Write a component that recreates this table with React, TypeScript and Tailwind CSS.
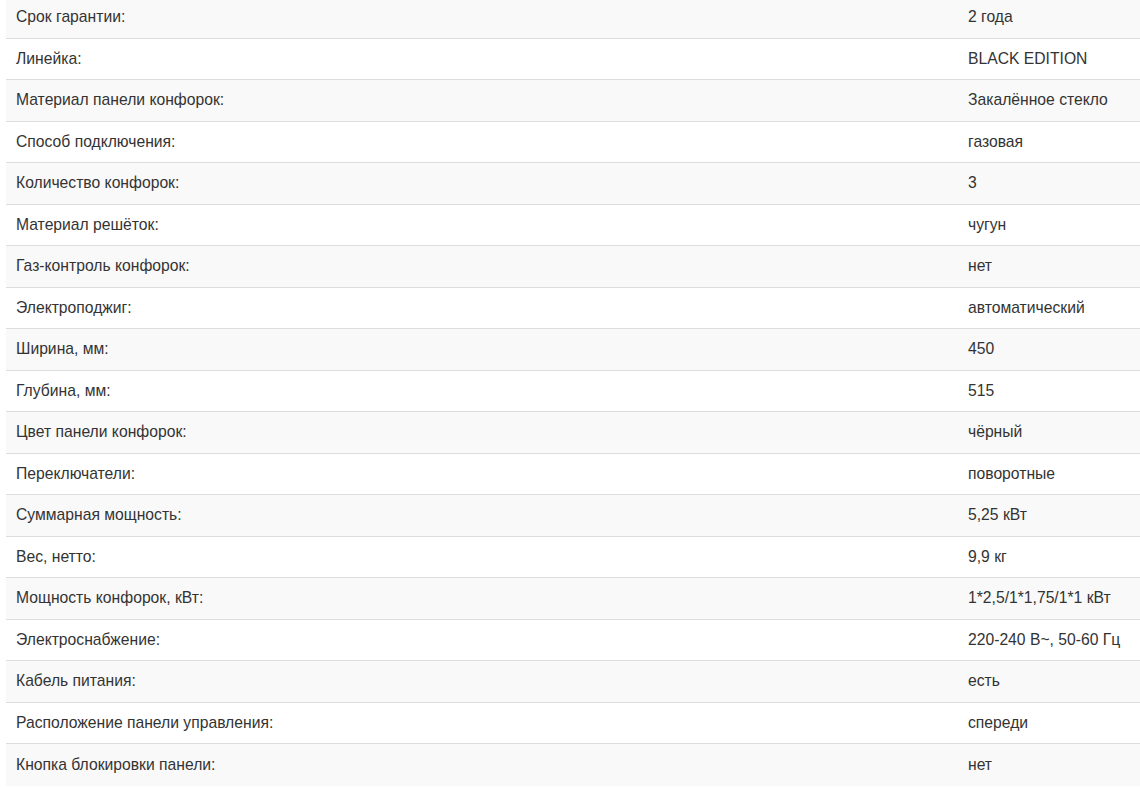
const specs: Array<[string, string]> = [
  ["Срок гарантии:", "2 года"],
  ["Линейка:", "BLACK EDITION"],
  ["Материал панели конфорок:", "Закалённое стекло"],
  ["Способ подключения:", "газовая"],
  ["Количество конфорок:", "3"],
  ["Материал решёток:", "чугун"],
  ["Газ-контроль конфорок:", "нет"],
  ["Электроподжиг:", "автоматический"],
  ["Ширина, мм:", "450"],
  ["Глубина, мм:", "515"],
  ["Цвет панели конфорок:", "чёрный"],
  ["Переключатели:", "поворотные"],
  ["Суммарная мощность:", "5,25 кВт"],
  ["Вес, нетто:", "9,9 кг"],
  ["Мощность конфорок, кВт:", "1*2,5/1*1,75/1*1 кВт"],
  ["Электроснабжение:", "220-240 В~, 50-60 Гц"],
  ["Кабель питания:", "есть"],
  ["Расположение панели управления:", "спереди"],
  ["Кнопка блокировки панели:", "нет"],
]

const App = () => {
  return (
    <div className="h-[787px] overflow-hidden bg-white pl-[6px]">
      <div className="-mt-[3px] font-['Liberation_Sans',Arial,sans-serif] text-[15.7px] text-[#333]">
        {specs.map(([label, value], i) => (
          <div
            key={label}
            className={
              "flex h-[41.5px] items-center " +
              (i % 2 === 0 ? "bg-[#f9f9f9]" : "bg-white") +
              (i < specs.length - 1 ? " border-b border-[#ddd]" : "")
            }
          >
            <div className="w-[962px] shrink-0 pl-[10px]">{label}</div>
            <div className="flex-1">{value}</div>
          </div>
        ))}
      </div>
    </div>
  )
}

export default App
